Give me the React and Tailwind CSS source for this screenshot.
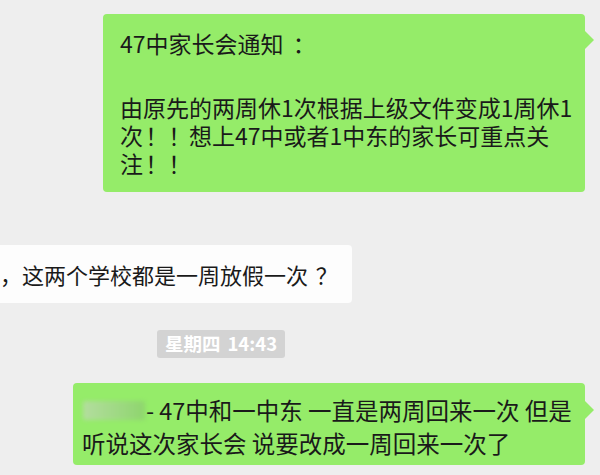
const FONT = { fontFamily: '"Noto Sans CJK SC", "Noto Sans", sans-serif' }

// 全角标点：字形往右挪到字框中间
function P({ children, shift = 'left-[0.1em]' }) {
  return [...children].map((c, i) => (
    <span key={i} className={`relative ${shift}`}>{c}</span>
  ))
}

function Tail({ top, color }) {
  return (
    <span
      className={`absolute left-full w-0 h-0 border-y-[9px] border-y-transparent border-l-[9px] ${color}`}
      style={{ top }}
    />
  )
}

export default function App() {
  return (
    <div
      lang="zh-CN"
      className="w-[600px] h-[475px] bg-[#eeeeee] overflow-hidden flex flex-col text-[#1a1a1a]"
      style={FONT}
    >
      {/* 通知消息 */}
      <div className="relative mt-[14px] ml-[103px] w-[482px] h-[178px] rounded-[4px] bg-[#95ec69] pl-[17px] pt-[15px] text-[23px] leading-[28px] whitespace-nowrap">
        <Tail top={17} color="border-l-[#95ec69]" />
        <p>47中家长会通知<P shift="left-[0.4em]">：</P></p>
        <div className="mt-[36px]">
          <p>由原先的两周休1次根据上级文件变成1周休1</p>
          <p>次<P>！！</P>想上47中或者1中东的家长可重点关</p>
          <p>注<P>！！</P></p>
        </div>
      </div>

      {/* 对方消息 */}
      <div className="mt-[53px] w-[352px] h-[58px] bg-[#fdfdfd] rounded-r-[4px] flex items-center text-[22px] whitespace-nowrap">
        <span>，这两个学校都是一周放假一次<P shift="left-[0.35em]">？</P></span>
      </div>

      {/* 时间 */}
      <div className="mt-[27px] ml-[157px] w-[128px] h-[28px] rounded-[3px] bg-[#d3d3d3] text-white font-bold text-[18.5px] flex items-center justify-center gap-[7px]">
        <span>星期四</span>
        <span>14:43</span>
      </div>

      {/* 我的消息 */}
      <div className="relative mt-[25px] ml-[73px] w-[512px] h-[82px] rounded-[4px] bg-[#95ec69] pl-[9px] pt-[11px] text-[23.5px] leading-[33px] whitespace-nowrap">
        <Tail top={18} color="border-l-[#95ec69]" />
        <p className="flex items-center">
          <span className="inline-block w-[62px] h-[19px] ml-[1px] rounded-[2px] bg-gradient-to-r from-[#b3dd9e] to-[#8ed56d] blur-[2px]" />
          <span className="ml-[1px]">-</span>
          <span className="ml-[5px]">47中和一中东 一直是两周回来一次 但是</span>
        </p>
        <p>听说这次家长会 说要改成一周回来一次了</p>
      </div>
    </div>
  )
}
